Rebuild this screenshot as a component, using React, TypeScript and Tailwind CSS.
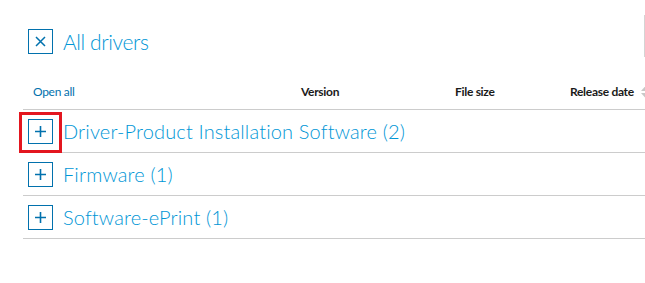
import React from 'react';

const groups = [
  { name: 'Driver-Product Installation Software', count: 2, marked: true },
  { name: 'Firmware', count: 1, marked: false },
  { name: 'Software-ePrint', count: 1, marked: false },
];

const PlusBox: React.FC = () => (
  <span className="flex h-[25px] w-[25px] shrink-0 items-center justify-center border border-[#0171ad]">
    <svg width="13" height="13" viewBox="0 0 13 13" fill="none" stroke="#0171ad" strokeWidth="1.6">
      <path d="M6.5 1v11M1 6.5h11" />
    </svg>
  </span>
);

const App: React.FC = () => {
  return (
    <div className="relative h-[283px] w-[645px] overflow-hidden bg-white font-['Lato','Liberation_Sans',sans-serif]">
      {/* cut-off search field edge */}
      <div className="absolute right-0 top-[15px] h-[42px] w-px bg-[#d4d4d4]" />

      <div className="flex items-center pl-[28px] pt-[29px]">
        <span className="flex h-[25px] w-[25px] items-center justify-center border border-[#0171ad]">
          <svg width="11" height="11" viewBox="0 0 11 11" fill="none" stroke="#0171ad" strokeWidth="1.5">
            <path d="M1 1l9 9M10 1l-9 9" />
          </svg>
        </span>
        <span className="ml-[10px] text-[21px] font-light leading-none tracking-[-0.4px] text-[#0096d6]">All drivers</span>
      </div>

      <div className="ml-[23px] mt-[20px]">
        <div className="flex h-[36px] items-center whitespace-nowrap border-b border-[#cccccc] text-[12px] font-bold tracking-[-0.3px]">
          <span className="w-[278px] shrink-0 pl-[10px] font-normal text-[#0171ad]">Open all</span>
          <span className="w-[154px] shrink-0 text-[#1a1a1a]">Version</span>
          <span className="w-[115px] shrink-0 text-[#1a1a1a]">File size</span>
          <span className="flex shrink-0 items-center gap-[7px] text-[#1a1a1a]">
            Release date
            <svg width="9" height="12" viewBox="0 0 9 12" fill="#c8c8c8">
              <path d="M4.5 0L9 5H0z" />
              <path d="M4.5 12L0 7h9z" />
            </svg>
          </span>
        </div>

        {groups.map((g) => (
          <div key={g.name} className="relative flex h-[43px] items-center border-b border-[#cccccc] pl-[5px]">
            {g.marked && (
              <div className="absolute left-[-4px] top-[2px] h-[41px] w-[43px] border-[3px] border-[#e3161f]" />
            )}
            <PlusBox />
            <span className="ml-[10px] text-[20px] font-light leading-none tracking-[0.15px] text-[#0096d6]">
              {g.name} ({g.count})
            </span>
          </div>
        ))}
      </div>
    </div>
  );
};

export default App;
